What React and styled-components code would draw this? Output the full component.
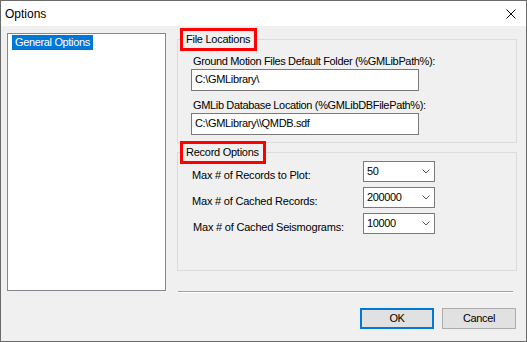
import React from "react";
import styled, { createGlobalStyle } from "styled-components";

const Global = createGlobalStyle`
  html, body { margin: 0; padding: 0; background: #ffffff; }
  * { box-sizing: border-box; }
`;

const Window = styled.div`
  width: 527px;
  height: 342px;
  border: 1px solid #6a6a6a;
  background: #f0f0f0;
  display: flex;
  flex-direction: column;
  font-family: "Liberation Sans", Arial, sans-serif;
  font-size: 11px;
  letter-spacing: -0.35px;
  color: #000;
`;

const TitleBar = styled.div`
  height: 25px;
  background: #ffffff;
  display: flex;
  align-items: center;
  justify-content: space-between;
  padding: 0 10px 0 4px;
`;

const Title = styled.span`
  font-size: 12px;
  letter-spacing: 0;
  padding-top: 1px;
`;

const CloseIcon = styled.svg`
  display: block;
  width: 10px;
  height: 10px;
`;

const Body = styled.div`
  display: flex;
  padding: 5px 9px 0 6px;
`;

const ListBox = styled.div`
  width: 159px;
  height: 258px;
  margin-top: 2px;
  border: 1px solid #828790;
  background: #ffffff;
  padding: 1px 0 0 4px;
`;

const ListItem = styled.span`
  display: inline-block;
  height: 15px;
  line-height: 15px;
  padding: 0 3px;
  background: ${(p) => (p.$selected ? "#0078d7" : "transparent")};
  color: ${(p) => (p.$selected ? "#ffffff" : "#000000")};
`;

const RightPane = styled.div`
  flex: 1;
  margin-left: 11px;
  display: flex;
  flex-direction: column;
`;

const Group = styled.fieldset`
  margin: ${(p) => (p.$first ? "0" : "1px 0 0 0")};
  padding: 0;
  min-width: 0;
  border: 1px solid #dcdcdc;
`;

const Legend = styled.legend`
  margin-left: 5px;
  padding: 0 4px 0 3px;
  height: 17px;
  line-height: 17px;
  letter-spacing: -0.26px;
  outline: 3px solid #ff0000;
  outline-offset: 0;
`;

const GroupContent = styled.div`
  padding: ${(p) => p.$pad};
`;

const FieldLabel = styled.div`
  height: 14px;
  line-height: 14px;
  padding-left: 2px;
  margin-top: ${(p) => p.$mt || 0}px;
`;

const TextInput = styled.div`
  width: 228px;
  height: 22px;
  margin-top: 1px;
  border: 1px solid #7a7a7a;
  background: #ffffff;
  display: flex;
  align-items: center;
  padding: 0 0 2px 3px;
  white-space: pre;
`;

const Rows = styled.div`
  display: flex;
  flex-direction: column;
  gap: 5px;
`;

const Row = styled.div`
  display: grid;
  grid-template-columns: 172px 72px;
  height: 21px;
`;

const RowLabel = styled.div`
  margin-top: 7px;
  line-height: 14px;
  height: 14px;
  letter-spacing: -0.2px;
  padding-left: ${(p) => (p.$indent ? 2 : 1)}px;
`;

const Select = styled.div`
  height: 21px;
  border: 1px solid #7a7a7a;
  background: #ffffff;
  display: flex;
  align-items: center;
  justify-content: space-between;
  padding: 0 4px 0 3px;
`;

const SelectValue = styled.span`
  padding-bottom: 2px;
`;

const Chevron = styled.svg`
  display: block;
  width: 8px;
  height: 5px;
`;

const Separator = styled.div`
  margin: 20px 4px 0 1px;
  border-top: 1px solid #a0a0a0;
  border-bottom: 1px solid #ffffff;
`;

const ButtonRow = styled.div`
  display: flex;
  justify-content: flex-end;
  gap: 8px;
  margin-top: 15px;
  padding-right: 10px;
`;

const Button = styled.div`
  width: 74px;
  height: 21px;
  background: #e1e1e1;
  border: ${(p) => (p.$default ? "2px solid #0078d7" : "1px solid #adadad")};
  display: flex;
  align-items: center;
  justify-content: center;
  padding-bottom: 1px;
`;

const ChevronDown = () => (
  <Chevron viewBox="0 0 8 5">
    <polyline points="0.5,0.5 4,4 7.5,0.5" fill="none" stroke="#555" strokeWidth="1" />
  </Chevron>
);

const rows = [
  { label: "Max # of Records to Plot:", value: "50" },
  { label: "Max # of Cached Records:", value: "200000" },
  { label: "Max # of Cached Seismograms:", value: "10000", indent: true },
];

export default function App() {
  return (
    <>
      <Global />
      <Window>
        <TitleBar>
          <Title>Options</Title>
          <CloseIcon viewBox="0 0 10 10">
            <path d="M0.5 0.5 L9.5 9.5 M9.5 0.5 L0.5 9.5" stroke="#000" strokeWidth="1" fill="none" />
          </CloseIcon>
        </TitleBar>
        <Body>
          <ListBox>
            <ListItem $selected>General Options</ListItem>
          </ListBox>
          <RightPane>
            <Group $first>
              <Legend>File Locations</Legend>
              <GroupContent $pad="6px 0 7px 13px">
                <FieldLabel>Ground Motion Files Default Folder (%GMLibPath%):</FieldLabel>
                <TextInput>C:\GMLibrary\</TextInput>
                <FieldLabel $mt={7}>GMLib Database Location (%GMLibDBFilePath%):</FieldLabel>
                <TextInput>C:\GMLibrary\\QMDB.sdf</TextInput>
              </GroupContent>
            </Group>
            <Group>
              <Legend>Record Options</Legend>
              <GroupContent $pad="0 0 36px 13px">
                <Rows>
                  {rows.map((r) => (
                    <Row key={r.label}>
                      <RowLabel $indent={r.indent}>{r.label}</RowLabel>
                      <Select>
                        <SelectValue>{r.value}</SelectValue>
                        <ChevronDown />
                      </Select>
                    </Row>
                  ))}
                </Rows>
              </GroupContent>
            </Group>
            <Separator />
          </RightPane>
        </Body>
        <ButtonRow>
          <Button $default>OK</Button>
          <Button>Cancel</Button>
        </ButtonRow>
      </Window>
    </>
  );
}
